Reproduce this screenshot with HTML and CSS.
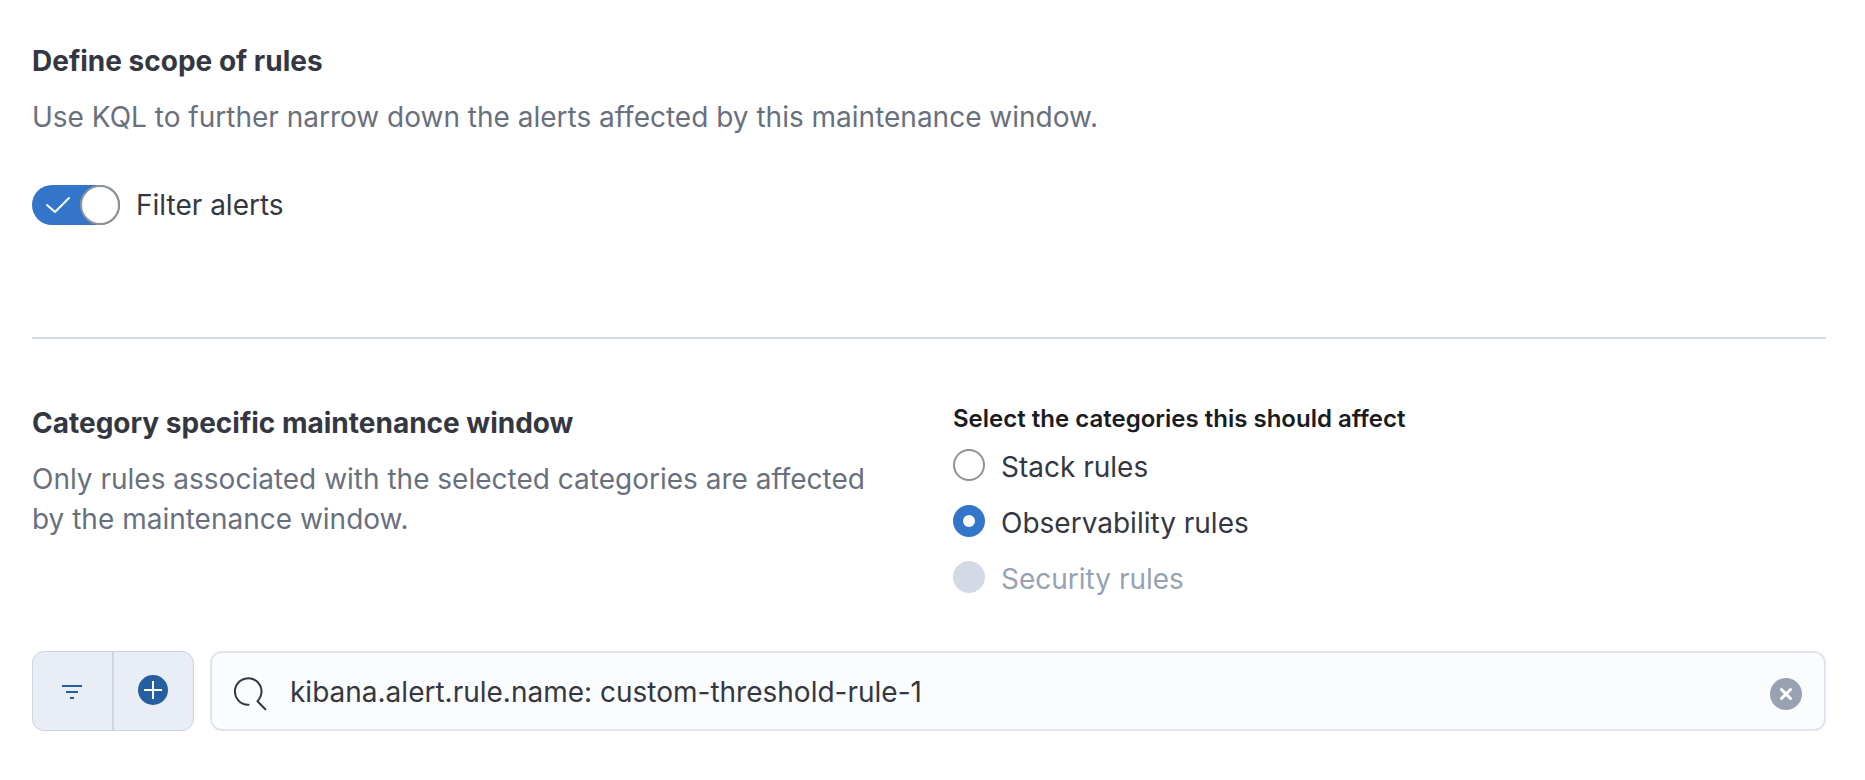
FILE: index.html
```html
<!DOCTYPE html>
<html lang="en">
<head>
<meta charset="utf-8">
<title>Maintenance window</title>
<link rel="stylesheet" href="styles.css">
</head>
<body>
<main class="page">
  <section class="scope">
    <h2 class="title">Define scope of rules</h2>
    <p class="description">Use KQL to further narrow down the alerts affected by this maintenance window.</p>
    <label class="switch">
      <span class="switch-body">
        <input class="switch-input" type="checkbox" role="switch" checked>
        <svg class="switch-check" viewBox="0 0 26 18" aria-hidden="true"><path d="M2 9 10 16 24 2"/></svg>
      </span>
      <span>Filter alerts</span>
    </label>
  </section>
  <hr class="rule">
  <section class="category">
    <div>
      <h2 class="title">Category specific maintenance window</h2>
      <p class="description">Only rules associated with the selected categories are affected by the maintenance window.</p>
    </div>
    <fieldset class="options">
      <legend class="options-label">Select the categories this should affect</legend>
      <div class="option"><input class="radio" type="radio" name="category" id="stack"><label for="stack">Stack rules</label></div>
      <div class="option"><input class="radio" type="radio" name="category" id="observability" checked><label for="observability">Observability rules</label></div>
      <div class="option"><input class="radio" type="radio" name="category" id="security" disabled><label for="security">Security rules</label></div>
    </fieldset>
  </section>
  <form class="query">
    <div class="filter-group">
      <button class="filter-button" type="button" aria-label="Saved query menu">
        <svg class="icon" viewBox="0 0 32 32" aria-hidden="true"><path class="bars" d="M5 11h20M9 17h12M13 23h4"/></svg>
      </button>
      <button class="filter-button" type="button" aria-label="Add filter">
        <svg class="icon" viewBox="0 0 32 32" aria-hidden="true"><circle cx="15" cy="15" r="15" fill="currentColor"/><path class="plus" d="M6 15h18M15 6v18"/></svg>
      </button>
    </div>
    <div class="search">
      <svg class="icon search-icon" viewBox="0 0 34 34" aria-hidden="true"><path d="M14.500 27.800A13.300 13.300 0 1 1 25.200 22L23.500 24.200 31.300 32.300"/></svg>
      <input class="search-input" type="text" aria-label="KQL query" value="kibana.alert.rule.name: custom-threshold-rule-1" spellcheck="false">
      <button class="clear" type="button" aria-label="Clear input">
        <svg viewBox="0 0 32 32" aria-hidden="true"><path d="M11.500 11.500 20.500 20.500M20.500 11.500 11.500 20.500"/></svg>
      </button>
    </div>
  </form>
</main>
</body>
</html>
```
FILE: styles.css
```css
*,
*::before {
  box-sizing: border-box;
}

body {
  margin: 0;
  background: #fff;
  color: #343741;
  font: 400 28px/40px Inter, "Liberation Sans", sans-serif;
  font-optical-sizing: none;
}

.page {
  padding: 41px 39px 48px 32px;
}

.title {
  margin: 0 0 16px;
  font-size: 28px;
  font-weight: 700;
  line-height: 40px;
}

.description {
  margin: 0;
  color: #69707d;
}

.switch {
  display: flex;
  align-items: center;
  gap: 16px;
  width: fit-content;
  margin-top: 48px;
}

.switch-body {
  display: grid;
  width: 88px;
  height: 40px;
}

.switch-input {
  grid-area: 1 / 1;
  appearance: none;
  display: flex;
  justify-content: flex-end;
  width: 88px;
  height: 40px;
  margin: 0;
  border-radius: 20px;
  background: #3376c9;
}

.switch-input::before {
  content: "";
  width: 40px;
  height: 40px;
  border: 2px solid #8f9294;
  border-radius: 50%;
  background: #fff;
}

.switch-check {
  grid-area: 1 / 1;
  align-self: center;
  width: 26px;
  height: 18px;
  margin-left: 13px;
  fill: none;
  stroke: #fff;
  stroke-width: 2;
  stroke-linecap: round;
  stroke-linejoin: round;
  pointer-events: none;
}

.rule {
  height: 2px;
  margin: 112px 0 64px;
  border: 0;
  background: #d3dae6;
}

.category {
  display: grid;
  grid-template-columns: 1fr 1fr;
  gap: 48px;
}

.options {
  min-width: 0;
  margin: 0;
  padding: 0;
  border: 0;
}

.options-label {
  margin-bottom: 12px;
  padding: 0;
  color: #1a1c21;
  font-size: 24px;
  font-weight: 600;
  line-height: 32px;
}

.option {
  display: flex;
  align-items: flex-start;
  gap: 16px;
}

.option + .option {
  margin-top: 16px;
}

.radio {
  appearance: none;
  display: grid;
  place-items: center;
  flex: none;
  width: 32px;
  height: 32px;
  margin: 2px 0 0;
  border: 2px solid #8f9294;
  border-radius: 50%;
  background: #fff;
}

.radio:checked {
  border-color: #3376c9;
  background: #3376c9;
}

.radio:checked::before {
  content: "";
  width: 12px;
  height: 12px;
  border-radius: 50%;
  background: #fff;
}

.radio:disabled {
  border-color: #d3dae6;
  background: #d3dae6;
}

.radio:disabled + label {
  color: #98a2b3;
}

.query {
  display: flex;
  gap: 16px;
  margin-top: 52px;
}

.filter-group {
  display: flex;
  flex: none;
  border: 1px solid #ced3e5;
  border-radius: 12px;
  background: #e9edf5;
  overflow: hidden;
}

.filter-button {
  display: grid;
  place-items: center;
  width: 79px;
  padding: 0;
  border: 0;
  background: none;
  color: #265f9f;
}

.filter-button + .filter-button {
  width: 81px;
  border-left: 2px solid #ced3e5;
}

.icon {
  display: block;
  width: 32px;
  height: 32px;
}

.bars,
.plus {
  fill: none;
  stroke: currentColor;
  stroke-width: 2;
}

.plus {
  stroke: #fff;
}

.search {
  display: flex;
  flex: 1;
  align-items: center;
  min-width: 0;
  height: 80px;
  padding: 2px 22px 0;
  border: 2px solid #e1e4f0;
  border-radius: 12px;
  background: #fbfcfd;
}

.search-icon {
  flex: none;
  width: 34px;
  height: 34px;
  margin-top: 4px;
  fill: none;
  stroke: #343741;
  stroke-width: 2;
  stroke-linecap: round;
  stroke-linejoin: round;
}

.search-input {
  flex: 1;
  min-width: 0;
  margin: 0 16px 0 22px;
  padding: 0;
  border: 0;
  outline: 0;
  background: none;
  color: inherit;
  font: inherit;
  font-optical-sizing: none;
}

.clear {
  flex: none;
  width: 32px;
  height: 32px;
  margin-top: 4px;
  padding: 0;
  border: 0;
  border-radius: 50%;
  background: #98a2b3;
}

.clear svg {
  display: block;
  fill: none;
  stroke: #fff;
  stroke-width: 3;
  stroke-linecap: round;
}
```
